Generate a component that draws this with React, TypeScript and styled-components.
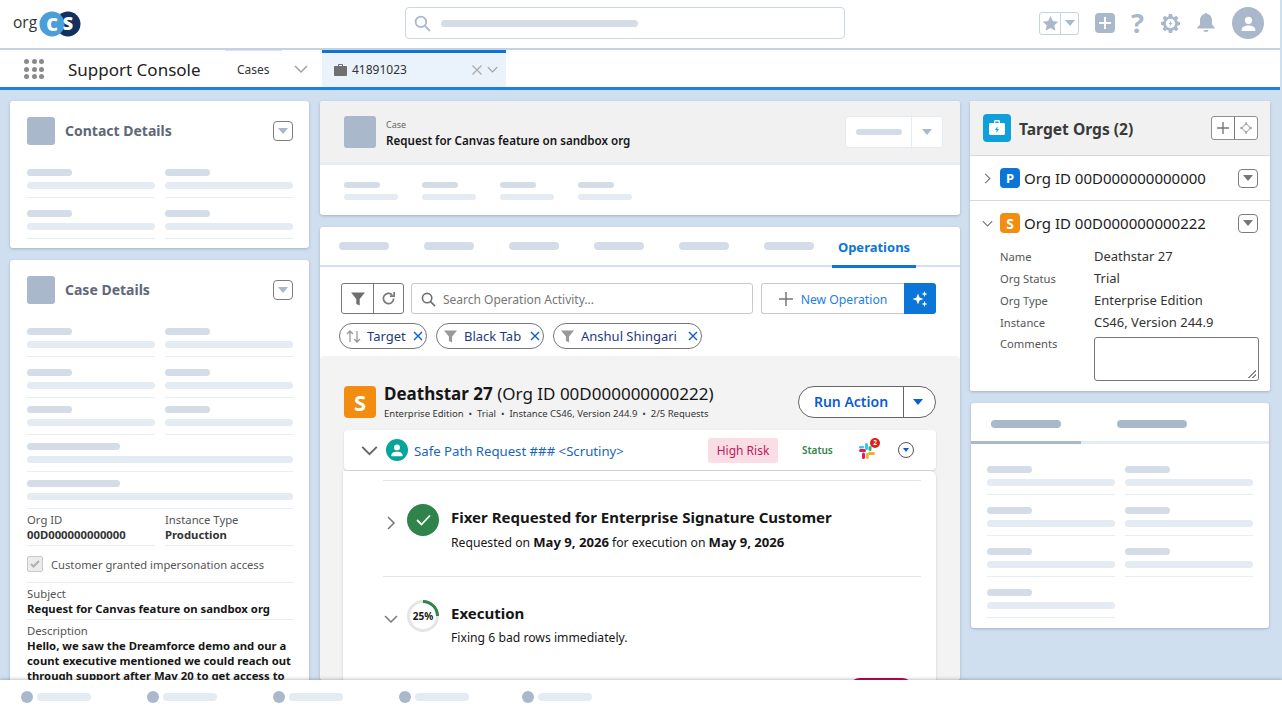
import React from 'react';
import styled, { createGlobalStyle } from 'styled-components';

const GlobalStyle = createGlobalStyle`
  html, body {
    margin: 0;
    padding: 0;
    height: 100%;
    overflow: hidden;
    background: #d0dff0;
    font-family: 'Noto Sans', 'Open Sans', sans-serif;
  }
  * { box-sizing: border-box; }
`;

const Page = styled.div`
  width: 1282px;
  height: 720px;
  display: flex;
  flex-direction: column;
  overflow: hidden;
`;

const Header = styled.header`
  width: 1280px;
  height: 50px;
  flex: none;
  background: #fff;
  border-bottom: 2px solid #c5d2e2;
  display: grid;
  grid-template-columns: 405px 440px 1fr;
  align-items: center;
`;

const Logo = styled.svg`
  margin-left: 12px;
  display: block;
`;

const LogoWord = styled.text`
  font-family: 'Open Sans', sans-serif;
  font-size: 15.5px;
  font-weight: 400;
  fill: #333;
`;

const LogoLetter = styled.text`
  font-family: 'Open Sans', sans-serif;
  font-size: 18px;
  font-weight: 800;
  fill: #fff;
  text-anchor: middle;
`;

const GlobalSearch = styled.div`
  height: 32px;
  margin-top: -2px;
  border: 1px solid #cdd6e3;
  border-radius: 4px;
  display: flex;
  align-items: center;
  padding-left: 8px;
  gap: 10px;
`;

const Skeleton = styled.div<{ $w: number; $h?: number; $tone?: 'light' | 'mid' | 'dark' }>`
  width: ${(p) => p.$w}px;
  height: ${(p) => p.$h ?? 7}px;
  flex: none;
  border-radius: 4px;
  background: ${(p) => (p.$tone === 'dark' ? '#a9b8ca' : p.$tone === 'mid' ? '#d4dce8' : '#e5ebf3')};
`;

const HeaderActions = styled.div`
  display: flex;
  align-items: center;
  justify-content: flex-end;
  padding-right: 16px;
  margin-top: -2px;
`;

const FavoriteGroup = styled.div`
  width: 40px;
  height: 23px;
  border: 1px solid #c5d2e2;
  border-radius: 3px;
  display: grid;
  grid-template-columns: 21px 1fr;
  align-items: center;
  justify-items: center;
  margin-right: 16px;
  & > :first-child {
    border-right: 1px solid #c5d2e2;
  }
`;

const FavoriteCell = styled.div`
  width: 100%;
  height: 21px;
  display: flex;
  align-items: center;
  justify-content: center;
`;

const Caret = styled.span<{ $color?: string; $size?: number }>`
  display: block;
  width: 0;
  height: 0;
  border-left: ${(p) => p.$size ?? 5}px solid transparent;
  border-right: ${(p) => p.$size ?? 5}px solid transparent;
  border-top: ${(p) => (p.$size ?? 5) + 1}px solid ${(p) => p.$color ?? '#a9b8ca'};
`;

const AddBox = styled.div`
  width: 20px;
  height: 20px;
  border-radius: 4px;
  background: #a9b8ca;
  display: flex;
  align-items: center;
  justify-content: center;
  margin-right: 15px;
`;

const HelpMark = styled.span`
  width: 15px;
  margin-right: 16px;
  color: #a9b8ca;
  font-size: 27px;
  line-height: 24px;
  font-weight: 700;
  text-align: center;
  display: flex;
  justify-content: center;
`;

const HeaderIcon = styled.svg`
  display: block;
  margin-right: 16px;
`;

const Avatar = styled.div`
  width: 32px;
  height: 32px;
  border-radius: 50%;
  background: #a9b8ca;
  display: flex;
  align-items: center;
  justify-content: center;
`;

const NavBar = styled.nav`
  width: 1280px;
  height: 40px;
  flex: none;
  background: #fff;
  border-bottom: 3px solid #1b7fe3;
  display: flex;
`;

const AppLauncher = styled.div`
  width: 20px;
  height: 20px;
  margin: 9px 24px 0 24px;
  display: grid;
  grid-template-columns: repeat(3, 5px);
  grid-auto-rows: 5px;
  gap: 2.5px;
`;

const LauncherDot = styled.span`
  border-radius: 50%;
  background: #8a8a8a;
`;

const AppName = styled.div`
  width: 157px;
  font-size: 17px;
  line-height: 40px;
  color: #222;
`;

const NavTab = styled.div`
  width: 97px;
  padding: 1px 14px 0 12px;
  display: flex;
  align-items: center;
  justify-content: space-between;
  font-size: 12px;
  color: #333;
  position: relative;
  &::before {
    content: '';
    position: absolute;
    top: 0;
    left: 0;
    width: 57px;
    height: 1px;
    background: #d8e2ee;
  }
`;

const ActiveTab = styled.div`
  width: 184px;
  background: #eaf2fc;
  border-top: 3px solid #0b76d8;
  display: flex;
  align-items: center;
  font-size: 12px;
  color: #333;
  padding: 0 8px 1px 12px;
  gap: 5px;
`;

const TabLabel = styled.span`
  flex: 1;
`;

const Content = styled.main`
  flex: 1;
  min-height: 0;
  overflow: hidden;
  padding: 11px 0 0 10px;
  display: flex;
  align-items: flex-start;
  gap: 11px;
`;

const Column = styled.div<{ $w: number }>`
  width: ${(p) => p.$w}px;
  flex: none;
  display: flex;
  flex-direction: column;
  gap: 12px;
`;

const RightColumn = styled(Column)`
  margin-left: -1px;
`;

const Card = styled.section`
  background: #fff;
  border-radius: 3px;
  box-shadow: 0 1px 3px rgba(60, 70, 90, 0.3);
`;

const SideCard = styled(Card)<{ $height: number }>`
  height: ${(p) => p.$height}px;
  padding: 16px 16px 0 17px;
`;

const CardTitleRow = styled.div`
  display: flex;
  align-items: center;
  gap: 10px;
  height: 28px;
  margin-bottom: 24px;
`;

const IconSquare = styled.div<{ $w: number; $h: number }>`
  width: ${(p) => p.$w}px;
  height: ${(p) => p.$h}px;
  flex: none;
  border-radius: 3px;
  background: #a9b8ca;
`;

const CardTitle = styled.h2`
  flex: 1;
  margin: 0;
  font-size: 14px;
  line-height: 20px;
  font-weight: 700;
  color: #5e6878;
`;

const MenuButton = styled.button<{ $size?: number }>`
  width: 20px;
  height: ${(p) => p.$size ?? 20}px;
  padding: 0;
  flex: none;
  background: #fff;
  border: 1px solid #7c7c7c;
  border-radius: 4px;
  display: flex;
  align-items: center;
  justify-content: center;
`;

const FieldGrid = styled.div`
  display: grid;
  grid-template-columns: 128px 128px;
  column-gap: 10px;
  row-gap: 12px;
`;

const TightFieldGrid = styled(FieldGrid)`
  margin-top: 8px;
`;

const FieldSkeleton = styled.div`
  display: flex;
  flex-direction: column;
  gap: 6px;
  padding-bottom: 8px;
  border-bottom: 1px solid #e8edf4;
`;

const WideField = styled(FieldSkeleton)`
  margin-top: 8px;
`;

const CaseInfoRow = styled.div`
  display: grid;
  grid-template-columns: 128px 128px;
  column-gap: 10px;
  padding-top: 3px;
`;

const CaseInfoCell = styled.div`
  height: 34px;
  border-bottom: 1px solid #e8edf4;
  font-size: 11.3px;
  line-height: 15px;
  color: #555;
`;

const StrongValue = styled.div`
  font-weight: 700;
  color: #333;
`;

const Impersonation = styled.div`
  height: 37px;
  border-bottom: 1px solid #e8edf4;
  display: flex;
  align-items: center;
  gap: 8px;
  font-size: 11.2px;
  color: #555;
`;

const DisabledCheck = styled.span`
  width: 16px;
  height: 16px;
  border: 1px solid #c9c9c9;
  border-radius: 2px;
  background: #ececec;
  display: flex;
  align-items: center;
  justify-content: center;
`;

const TextField = styled.div`
  padding-top: 3px;
  font-size: 11.3px;
  line-height: 15px;
  color: #555;
  & + & {
    border-top: 1px solid #e8edf4;
    padding-top: 3px;
  }
`;

const TextValue = styled.div`
  font-weight: 700;
  color: #161616;
  padding-bottom: 3px;
  white-space: nowrap;
`;

const HighlightsCard = styled(Card)`
  height: 114px;
  overflow: hidden;
`;

const RecordHeader = styled.div`
  height: 64px;
  background: #f1f1f1;
  border-bottom: 3px solid #e6edf4;
  display: flex;
  align-items: center;
  padding: 0 17px 0 24px;
  gap: 10px;
`;

const RecordTitle = styled.div`
  flex: 1;
  color: #161616;
  font-size: 11.6px;
  font-weight: 600;
  line-height: 15px;
  padding-top: 2px;
`;

const RecordType = styled.div`
  color: #666;
  font-size: 9px;
  font-weight: 400;
  line-height: 13px;
  margin-bottom: 2px;
`;

const FollowGroup = styled.div`
  width: 98px;
  height: 32px;
  margin-top: 1px;
  background: #fff;
  border: 1px solid #e5ebf3;
  border-radius: 3px;
  display: grid;
  grid-template-columns: 1fr 31px;
  align-items: center;
  justify-items: center;
`;

const FollowCaret = styled.div`
  height: 100%;
  width: 100%;
  border-left: 1px solid #e5ebf3;
  display: flex;
  align-items: center;
  justify-content: center;
`;

const HighlightFields = styled.div`
  display: flex;
  gap: 24px;
  padding: 17px 24px;
`;

const HighlightField = styled.div`
  display: flex;
  flex-direction: column;
  gap: 6px;
`;

const WorkCard = styled(Card)`
  height: 453px;
  overflow: hidden;
`;

const TabStrip = styled.div`
  height: 40px;
  border-bottom: 2px solid #d4e0ee;
  display: flex;
  align-items: center;
  padding-left: 19px;
  gap: 35px;
`;

const TabSkeleton = styled(Skeleton)`
  margin-top: -1px;
`;

const OperationsTab = styled.div`
  height: 41px;
  width: 84px;
  margin-left: -17px;
  margin-bottom: -2px;
  border-bottom: 3px solid #0b76d8;
  color: #0b76d8;
  font-size: 13px;
  font-weight: 700;
  display: flex;
  align-items: center;
  justify-content: center;
  padding-top: 2px;
`;

const Toolbar = styled.div`
  height: 32px;
  margin: 16px 24px 0 21px;
  display: flex;
  gap: 7px;
`;

const ButtonGroup = styled.div`
  width: 63px;
  height: 31px;
  border: 1px solid #777;
  border-radius: 3px;
  display: grid;
  grid-template-columns: 31px 1fr;
  background: #fff;
  flex: none;
`;

const GroupCell = styled.div`
  display: flex;
  align-items: center;
  justify-content: center;
  & + & { border-left: 1px solid #777; }
`;

const OperationSearch = styled.div`
  width: 342px;
  height: 31px;
  border: 1px solid #c9c9c9;
  border-radius: 3px;
  display: flex;
  align-items: center;
  gap: 7px;
  padding: 1px 0 0 9px;
  color: #777;
  font-size: 12px;
  flex: none;
`;

const NewOperation = styled.div`
  width: 175px;
  height: 31px;
  margin-left: 1px;
  display: flex;
`;

const NewOperationLabel = styled.div`
  flex: 1;
  border: 1px solid #c9c9c9;
  border-right: 0;
  border-radius: 3px 0 0 3px;
  display: flex;
  align-items: center;
  justify-content: center;
  gap: 8px;
  padding-top: 1px;
  color: #1b7fe3;
  font-size: 12.2px;
`;

const SparkleButton = styled.div`
  width: 32px;
  background: #0b76d8;
  border-radius: 0 3px 3px 0;
  display: flex;
  align-items: center;
  justify-content: center;
`;

const ChipRow = styled.div`
  margin: 8px 0 0 19px;
  display: flex;
  gap: 9px;
`;

const Chip = styled.div<{ $w: number }>`
  width: ${(p) => p.$w}px;
  height: 26px;
  border: 1px solid #777;
  border-radius: 13px;
  padding: 0 3px 0 6px;
  background: #fff;
  display: flex;
  align-items: center;
  color: #1f3a7a;
  font-size: 13px;
  white-space: nowrap;
  & > svg:first-child { margin-right: 6px; }
  & > svg:last-child { margin-left: auto; }
`;

const OperationsPanel = styled.div`
  margin-top: 7px;
  height: 324px;
  background: #f3f3f3;
  border-radius: 4px 4px 0 0;
  padding: 30px 24px 0 24px;
`;

const OrgHeading = styled.div`
  display: flex;
  align-items: center;
  gap: 8px;
  height: 32px;
`;

const OrgBadge = styled.div<{ $bg: string; $size: number; $font: number }>`
  width: ${(p) => p.$size}px;
  height: ${(p) => p.$size}px;
  flex: none;
  border-radius: 4px;
  background: ${(p) => p.$bg};
  color: #fff;
  font-weight: 700;
  font-size: ${(p) => p.$font}px;
  display: flex;
  align-items: center;
  justify-content: center;
`;

const OrgText = styled.div`
  flex: 1;
  color: #161616;
`;

const OrgName = styled.div`
  font-size: 17px;
  line-height: 20px;
  white-space: nowrap;
  & strong { font-weight: 700; }
`;

const OrgMeta = styled.div`
  margin-top: 3px;
  font-size: 9.5px;
  line-height: 13px;
  white-space: nowrap;
  color: #333;
`;

const RunAction = styled.div`
  width: 138px;
  height: 32px;
  border: 1px solid #666;
  border-radius: 16px;
  background: #fff;
  display: grid;
  grid-template-columns: 1fr 31px;
`;

const RunLabel = styled.div`
  border-right: 1px solid #666;
  color: #0b5cd5;
  font-size: 14px;
  font-weight: 600;
  display: flex;
  align-items: center;
  justify-content: center;
  padding-bottom: 2px;
`;

const RunCaret = styled.div`
  display: flex;
  align-items: center;
  justify-content: center;
  padding-right: 3px;
`;

const RequestRow = styled.div`
  margin-top: 12px;
  height: 40px;
  background: #fff;
  border-radius: 4px;
  box-shadow: 0 1px 2px rgba(60, 60, 60, 0.2);
  display: flex;
  align-items: center;
  padding: 0 22px 0 17px;
`;

const RequestAvatar = styled.div`
  width: 22px;
  height: 22px;
  margin: 0 6px 0 8px;
  border-radius: 50%;
  background: #06a59a;
  display: flex;
  align-items: center;
  justify-content: center;
`;

const RequestLink = styled.div`
  width: 294px;
  padding-top: 1px;
  color: #1b66b8;
  font-size: 13.2px;
  white-space: nowrap;
`;

const RiskTag = styled.div`
  width: 70px;
  height: 25px;
  border-radius: 3px;
  background: #fbdde6;
  color: #c2185b;
  font-size: 12px;
  display: flex;
  align-items: center;
  justify-content: center;
`;

const StatusText = styled.div`
  margin-left: 24px;
  width: 32px;
  color: #2e844a;
  font-size: 10px;
  font-weight: 600;
`;

const SlackWrap = styled.div`
  position: relative;
  margin-left: 25px;
  width: 16px;
  height: 16px;
`;

const SlackBadge = styled.span`
  position: absolute;
  top: -4px;
  right: -5px;
  width: 10px;
  height: 10px;
  border-radius: 50%;
  background: #e0201b;
  color: #fff;
  font-size: 6.5px;
  font-weight: 700;
  line-height: 10px;
  text-align: center;
`;

const CircleMenu = styled.div`
  margin-left: auto;
  width: 16px;
  height: 16px;
  border: 1px solid #555;
  border-radius: 50%;
  display: flex;
  align-items: center;
  justify-content: center;
`;

const StepsCard = styled.div`
  margin: 1px 0 0 -1px;
  height: 240px;
  background: #fff;
  padding: 9px 15px 0 40px;
  border-radius: 0 6px 0 0;
  box-shadow: 0 1px 3px rgba(60, 60, 60, 0.2);
  position: relative;
`;

const Step = styled.div`
  height: 96px;
  border-top: 1px solid #e2e2f0;
  display: flex;
  padding-top: 23px;
  position: relative;
`;

const StepChevron = styled.div`
  position: absolute;
  left: 1px;
  top: 32px;
`;

const StepIcon = styled.div`
  width: 32px;
  height: 32px;
  flex: none;
  margin: 0 12px 0 24px;
  position: relative;
`;

const DoneCircle = styled.div`
  width: 32px;
  height: 32px;
  border-radius: 50%;
  background: #2e844a;
  display: flex;
  align-items: center;
  justify-content: center;
`;

const ProgressLabel = styled.span`
  position: absolute;
  inset: 0;
  display: flex;
  align-items: center;
  justify-content: center;
  font-size: 10px;
  font-weight: 700;
  color: #161616;
`;

const StepBody = styled.div`
  margin-top: 2px;
  color: #161616;
  white-space: nowrap;
`;

const StepTitle = styled.div`
  font-size: 15px;
  line-height: 22px;
  font-weight: 700;
`;

const StepText = styled.div`
  margin-top: 4px;
  font-size: 12.2px;
  line-height: 20px;
  & strong { font-weight: 700; font-size: 13.1px; }
`;

const PeekPill = styled.div`
  position: absolute;
  right: 22px;
  top: 207px;
  width: 66px;
  height: 24px;
  border-radius: 12px;
  background: #b5004f;
`;

const TargetCard = styled(Card)`
  height: 290px;
  overflow: hidden;
  border-radius: 2px;
`;

const TargetHeader = styled.div`
  height: 55px;
  background: #f1f1f1;
  border-bottom: 1px solid #d8d8d8;
  display: flex;
  align-items: center;
  padding: 0 12px 0 13px;
`;

const TargetIcon = styled.div`
  width: 28px;
  height: 28px;
  border-radius: 4px;
  background: #0fa0dc;
  margin-right: 8px;
  display: flex;
  align-items: center;
  justify-content: center;
`;

const TargetTitle = styled.h2`
  flex: 1;
  margin: 0;
  padding-top: 1px;
  font-size: 15.6px;
  font-weight: 700;
  color: #3a3a3a;
`;

const TargetActions = styled.div`
  width: 47px;
  height: 24px;
  border: 1px solid #8f8f8f;
  border-radius: 3px;
  display: grid;
  grid-template-columns: 22px 1fr;
  background: #fff;
`;

const TargetRow = styled.div<{ $divider?: boolean }>`
  height: ${(p) => (p.$divider ? 45 : 44)}px;
  display: flex;
  align-items: center;
  padding: 0 12px 0 12px;
  border-bottom: ${(p) => (p.$divider ? '1px solid #d8d8d8' : '0')};
`;

const RowChevron = styled.div`
  width: 18px;
  display: flex;
`;

const OrgIdText = styled.div`
  flex: 1;
  margin-left: 4px;
  font-size: 15px;
  color: #222;
  white-space: nowrap;
`;

const DetailList = styled.dl`
  margin: 0;
  padding: 0 11px 0 30px;
  display: grid;
  grid-template-columns: 94px 1fr;
  grid-auto-rows: 22px;
  align-items: center;
`;

const DetailKey = styled.dt`
  font-size: 11.2px;
  color: #555;
`;

const DetailValue = styled.dd`
  margin: 0;
  font-size: 13px;
  color: #333;
  white-space: nowrap;
`;

const CommentKey = styled(DetailKey)`
  align-self: start;
  padding-top: 3px;
`;

const CommentBox = styled.div`
  align-self: start;
  height: 44px;
  margin-top: 4px;
  width: 165px;
  border: 1px solid #777;
  border-radius: 3px;
  position: relative;
  &::after {
    content: '';
    position: absolute;
    right: 2px;
    bottom: 2px;
    width: 8px;
    height: 8px;
    background: linear-gradient(135deg, transparent 50%, #888 50%, #888 58%, transparent 58%, transparent 75%, #888 75%, #888 83%, transparent 83%);
  }
`;

const InsightCard = styled(Card)`
  height: 225px;
  margin: 0 1px;
`;

const InsightTabs = styled.div`
  height: 41px;
  border-bottom: 3px solid #e5ebf3;
  display: flex;
  position: relative;
  align-items: center;
  padding: 3px 0 0 20px;
  gap: 56px;
  &::after {
    content: '';
    position: absolute;
    left: 0;
    bottom: -3px;
    width: 110px;
    height: 3px;
    background: #a9b8ca;
  }
`;

const InsightGrid = styled(FieldGrid)`
  padding: 22px 0 0 16px;
`;

const UtilityBar = styled.footer`
  position: relative;
  z-index: 2;
  width: 1282px;
  height: 40px;
  flex: none;
  background: #fff;
  box-shadow: 0 -1px 3px rgba(60, 60, 60, 0.3);
  display: flex;
  align-items: center;
  padding: 0 0 6px 21px;
`;

const UtilityItem = styled.div<{ $w: number }>`
  width: ${(p) => p.$w}px;
  display: flex;
  align-items: center;
  gap: 4px;
`;

const UtilityDot = styled.span`
  width: 12px;
  height: 12px;
  border-radius: 50%;
  background: #a9b8ca;
`;

const Chevron = ({ dir = 'down', size = 14, color = '#8a8a8a', width = 1.5 }: { dir?: 'down' | 'right'; size?: number; color?: string; width?: number }) => (
  <svg width={size} height={size} viewBox="0 0 14 14" fill="none" stroke={color} strokeWidth={width}>
    <path d={dir === 'down' ? 'M1 4l6 6 6-6' : 'M4 1l6 6-6 6'} />
  </svg>
);

const Funnel = ({ size = 16, color = '#8f8f8f' }: { size?: number; color?: string }) => (
  <svg width={size} height={size} viewBox="0 0 16 16" fill={color}>
    <path d="M1 1.5h14L9.7 8v6.5l-3.4-1.6V8z" />
  </svg>
);

const CloseX = () => (
  <svg width="10" height="10" viewBox="0 0 10 10" fill="none" stroke="#0b5cd5" strokeWidth="1.4">
    <path d="M1 1l8 8M9 1l-8 8" />
  </svg>
);

const Magnifier = ({ size = 16, color = '#a9b8ca' }: { size?: number; color?: string }) => (
  <svg width={size} height={size} viewBox="0 0 16 16" fill="none" stroke={color} strokeWidth="1.7">
    <circle cx="6.5" cy="6.5" r="5" />
    <path d="M10.2 10.2L15 15" />
  </svg>
);

const Person = ({ size = 16 }: { size?: number }) => (
  <svg width={size} height={size} viewBox="0 0 16 16" fill="#fff">
    <circle cx="8" cy="5" r="3.4" />
    <path d="M1.5 14.5c0-3.2 2.6-4.6 6.5-4.6s6.5 1.4 6.5 4.6c0 .4-.3.5-.6.5H2.100c-.3 0-.6-.1-.6-.5z" />
  </svg>
);

const SlackLogo = () => (
  <svg width="16" height="16" viewBox="0 0 16 16">
    <rect x="0" y="6" width="7" height="3" rx="1.5" fill="#e01e5a" />
    <rect x="3" y="9.5" width="3" height="6.5" rx="1.5" fill="#e01e5a" />
    <rect x="6" y="0" width="3" height="7" rx="1.5" fill="#36c5f0" />
    <rect x="0" y="3" width="5" height="2.5" rx="1.2" fill="#36c5f0" />
    <rect x="9.5" y="3" width="3" height="5" rx="1.5" fill="#2eb67d" />
    <rect x="9" y="9" width="7" height="3" rx="1.5" fill="#ecb22e" />
    <rect x="7" y="10" width="2.6" height="6" rx="1.3" fill="#ecb22e" />
  </svg>
);

const SkeletonField = () => (
  <FieldSkeleton>
    <Skeleton $w={45} $tone="mid" />
    <Skeleton $w={128} />
  </FieldSkeleton>
);

const App = () => (
  <Page>
    <GlobalStyle />
    <Header>
      <Logo width="80" height="28" viewBox="0 0 80 28">
        <LogoWord x="1" y="18">org</LogoWord>
        <circle cx="56" cy="14" r="12.5" fill="#14305f" />
        <circle cx="40" cy="14" r="12.5" fill="#4a9fd8" />
        <LogoLetter x="40" y="20.500">C</LogoLetter>
        <LogoLetter x="56" y="20">S</LogoLetter>
      </Logo>
      <GlobalSearch>
        <Magnifier size={17} />
        <Skeleton $w={197} $h={7} $tone="mid" />
      </GlobalSearch>
      <HeaderActions>
        <FavoriteGroup>
          <FavoriteCell>
            <svg width="17" height="17" viewBox="0 0 24 24" fill="#a9b8ca">
              <path d="M12 1.500l3.300 7 7.700.9-5.700 5.200 1.600 7.600L12 18.400l-6.900 3.800 1.600-7.600L1 9.400l7.700-.9z" />
            </svg>
          </FavoriteCell>
          <FavoriteCell>
            <Caret />
          </FavoriteCell>
        </FavoriteGroup>
        <AddBox>
          <svg width="12" height="12" viewBox="0 0 12 12" stroke="#fff" strokeWidth="2">
            <path d="M6 0v12M0 6h12" />
          </svg>
        </AddBox>
        <HelpMark>?</HelpMark>
        <HeaderIcon width="19" height="19" viewBox="0 0 20 20">
          <path
            fill="#a9b8ca"
            fillRule="evenodd"
            d="M8.300 0h3.400l.5 2.600 1.600.7 2.200-1.500 2.300 2.300-1.500 2.200.7 1.600 2.500.5v3.200l-2.500.5-.7 1.600 1.500 2.200-2.300 2.300-2.200-1.500-1.600.7-.5 2.600H8.300l-.5-2.600-1.600-.7L4 18.200l-2.300-2.300 1.500-2.200-.7-1.600L0 11.600V8.400l2.500-.5.7-1.600-1.500-2.200L4 1.800l2.200 1.500 1.600-.7zM10 5a5 5 0 100 10 5 5 0 000-10z"
          />
          <path fill="#a9b8ca" d="M11 6.500L8 10.500h1.700L9 13.500l3-4h-1.700z" />
        </HeaderIcon>
        <HeaderIcon width="20" height="20" viewBox="0 0 20 20" fill="#a9b8ca">
          <path d="M10 0a2 2 0 011.600 1C14.400 1.700 16 4 16 7v4.500l2.600 3c.4.5 0 1.100-.6 1.100H2c-.6 0-1-.6-.6-1.100l2.600-3V7c0-3 1.600-5.300 4.400-6A2 2 0 0110 0z" />
          <path d="M7.300 17h5.400a2.800 2.800 0 01-5.400 0z" />
        </HeaderIcon>
        <Avatar>
          <Person size={17} />
        </Avatar>
      </HeaderActions>
    </Header>

    <NavBar>
      <AppLauncher>
        {Array.from({ length: 9 }).map((_, i) => (
          <LauncherDot key={i} />
        ))}
      </AppLauncher>
      <AppName>Support Console</AppName>
      <NavTab>
        Cases
        <Chevron size={14} color="#a0a0a0" />
      </NavTab>
      <ActiveTab>
        <svg width="13" height="12" viewBox="0 0 13 12" fill="#6f6f6f">
          <path d="M4 2V.8C4 .4 4.400 0 4.800 0h3.400c.4 0 .8.4.8.8V2h3c.6 0 1 .4 1 1v8c0 .6-.4 1-1 1H1c-.6 0-1-.4-1-1V3c0-.6.4-1 1-1zm1 0h3V1H5z" />
        </svg>
        <TabLabel>41891023</TabLabel>
        <svg width="10" height="10" viewBox="0 0 10 10" stroke="#a9a9a9" strokeWidth="1.2">
          <path d="M.5.5l9 9M9.500.5l-9 9" />
        </svg>
        <Chevron size={11} color="#a0a0a0" />
      </ActiveTab>
    </NavBar>

    <Content>
      <Column $w={299}>
        <SideCard $height={147}>
          <CardTitleRow>
            <IconSquare $w={28} $h={28} />
            <CardTitle>Contact Details</CardTitle>
            <MenuButton>
              <Caret />
            </MenuButton>
          </CardTitleRow>
          <FieldGrid>
            <SkeletonField />
            <SkeletonField />
            <SkeletonField />
            <SkeletonField />
          </FieldGrid>
        </SideCard>
        <SideCard $height={480}>
          <CardTitleRow>
            <IconSquare $w={28} $h={28} />
            <CardTitle>Case Details</CardTitle>
            <MenuButton>
              <Caret />
            </MenuButton>
          </CardTitleRow>
          <FieldGrid>
            <SkeletonField />
            <SkeletonField />
            <SkeletonField />
            <SkeletonField />
          </FieldGrid>
          <TightFieldGrid>
            <SkeletonField />
            <SkeletonField />
          </TightFieldGrid>
          <WideField>
            <Skeleton $w={93} $tone="mid" />
            <Skeleton $w={266} />
          </WideField>
          <WideField>
            <Skeleton $w={93} $tone="mid" />
            <Skeleton $w={266} />
          </WideField>
          <CaseInfoRow>
            <CaseInfoCell>
              Org ID
              <StrongValue>00D000000000000</StrongValue>
            </CaseInfoCell>
            <CaseInfoCell>
              Instance Type
              <StrongValue>Production</StrongValue>
            </CaseInfoCell>
          </CaseInfoRow>
          <Impersonation>
            <DisabledCheck>
              <svg width="10" height="8" viewBox="0 0 10 8" fill="none" stroke="#b0b0b0" strokeWidth="2">
                <path d="M1 4l2.500 2.500L9 1" />
              </svg>
            </DisabledCheck>
            Customer granted impersonation access
          </Impersonation>
          <TextField>
            Subject
            <TextValue>Request for Canvas feature on sandbox org</TextValue>
          </TextField>
          <TextField>
            Description
            <TextValue>
              Hello, we saw the Dreamforce demo and our a
              <br />
              count executive mentioned we could reach out
              <br />
              through support after May 20 to get access to
            </TextValue>
          </TextField>
        </SideCard>
      </Column>

      <Column $w={640}>
        <HighlightsCard>
          <RecordHeader>
            <IconSquare $w={32} $h={32} />
            <RecordTitle>
              <RecordType>Case</RecordType>
              Request for Canvas feature on sandbox org
            </RecordTitle>
            <FollowGroup>
              <Skeleton $w={46} $h={6} $tone="mid" />
              <FollowCaret>
                <Caret />
              </FollowCaret>
            </FollowGroup>
          </RecordHeader>
          <HighlightFields>
            {[0, 1, 2, 3].map((i) => (
              <HighlightField key={i}>
                <Skeleton $w={36} $h={6} $tone="mid" />
                <Skeleton $w={54} $h={6} />
              </HighlightField>
            ))}
          </HighlightFields>
        </HighlightsCard>

        <WorkCard>
          <TabStrip>
            {[0, 1, 2, 3, 4, 5].map((i) => (
              <TabSkeleton key={i} $w={50} $h={8} $tone="mid" />
            ))}
            <OperationsTab>Operations</OperationsTab>
          </TabStrip>
          <Toolbar>
            <ButtonGroup>
              <GroupCell>
                <Funnel size={16} color="#6f6f6f" />
              </GroupCell>
              <GroupCell>
                <svg width="15" height="15" viewBox="0 0 16 16" fill="none" stroke="#777" strokeWidth="1.8">
                  <path d="M13.500 8a5.500 5.500 0 11-1.600-3.900" />
                  <path d="M14 1v4.500H9.500" />
                </svg>
              </GroupCell>
            </ButtonGroup>
            <OperationSearch>
              <Magnifier size={15} color="#6f6f6f" />
              Search Operation Activity...
            </OperationSearch>
            <NewOperation>
              <NewOperationLabel>
                <svg width="14" height="14" viewBox="0 0 14 14" stroke="#777" strokeWidth="1.5">
                  <path d="M7 0v14M0 7h14" />
                </svg>
                New Operation
              </NewOperationLabel>
              <SparkleButton>
                <svg width="16" height="16" viewBox="0 0 16 16" fill="#fff">
                  <path d="M6 2.500l1.500 4 4 1.500-4 1.500L6 13.500l-1.500-4-4-1.500 4-1.500z" />
                  <path d="M12.500 0l.8 2.200 2.200.8-2.200.8-.8 2.200-.8-2.200-2.200-.8 2.200-.8zM12.500 10l.8 2.200 2.200.8-2.200.8-.8 2.200-.8-2.200-2.200-.8 2.200-.8z" />
                </svg>
              </SparkleButton>
            </NewOperation>
          </Toolbar>
          <ChipRow>
            <Chip $w={88}>
              <svg width="15" height="15" viewBox="0 0 15 15" fill="none" stroke="#9a9a9a" strokeWidth="1.300">
                <path d="M4 13V2M1 5l3-3 3 3M11 2v11M8 10l3 3 3-3" />
              </svg>
              Target
              <CloseX />
            </Chip>
            <Chip $w={108}>
              <Funnel size={15} color="#9a9a9a" />
              Black Tab
              <CloseX />
            </Chip>
            <Chip $w={149}>
              <Funnel size={15} color="#9a9a9a" />
              Anshul Shingari
              <CloseX />
            </Chip>
          </ChipRow>
          <OperationsPanel>
            <OrgHeading>
              <OrgBadge $bg="#f38d10" $size={32} $font={22}>S</OrgBadge>
              <OrgText>
                <OrgName>
                  <strong>Deathstar 27</strong> (Org ID 00D000000000222)
                </OrgName>
                <OrgMeta>Enterprise Edition&nbsp; •&nbsp; Trial&nbsp; •&nbsp; Instance CS46, Version 244.9&nbsp; •&nbsp; 2/5 Requests</OrgMeta>
              </OrgText>
              <RunAction>
                <RunLabel>Run Action</RunLabel>
                <RunCaret>
                  <Caret $color="#0b5cd5" $size={5} />
                </RunCaret>
              </RunAction>
            </OrgHeading>
            <RequestRow>
              <Chevron size={17} color="#666" width={1.6} />
              <RequestAvatar>
                <Person size={14} />
              </RequestAvatar>
              <RequestLink>Safe Path Request ### &lt;Scrutiny&gt;</RequestLink>
              <RiskTag>High Risk</RiskTag>
              <StatusText>Status</StatusText>
              <SlackWrap>
                <SlackLogo />
                <SlackBadge>2</SlackBadge>
              </SlackWrap>
              <CircleMenu>
                <Caret $color="#0b5cd5" $size={3} />
              </CircleMenu>
            </RequestRow>
            <StepsCard>
              <Step>
                <StepChevron>
                  <Chevron dir="right" size={14} color="#777" />
                </StepChevron>
                <StepIcon>
                  <DoneCircle>
                    <svg width="15" height="12" viewBox="0 0 15 12" fill="none" stroke="#fff" strokeWidth="1.800">
                      <path d="M1 6l4.500 4.500L14 1.500" />
                    </svg>
                  </DoneCircle>
                </StepIcon>
                <StepBody>
                  <StepTitle>Fixer Requested for Enterprise Signature Customer</StepTitle>
                  <StepText>
                    Requested on <strong>May 9, 2026</strong> for execution on <strong>May 9, 2026</strong>
                  </StepText>
                </StepBody>
              </Step>
              <Step>
                <StepChevron>
                  <Chevron size={14} color="#777" />
                </StepChevron>
                <StepIcon>
                  <svg width="32" height="32" viewBox="0 0 32 32" fill="none" strokeWidth="3">
                    <circle cx="16" cy="16" r="14.500" stroke="#e5e5e5" />
                    <path d="M16 1.500A14.500 14.500 0 0130.500 16" stroke="#2e844a" />
                  </svg>
                  <ProgressLabel>25%</ProgressLabel>
                </StepIcon>
                <StepBody>
                  <StepTitle>Execution</StepTitle>
                  <StepText>Fixing 6 bad rows immediately.</StepText>
                </StepBody>
              </Step>
              <PeekPill />
            </StepsCard>
          </OperationsPanel>
        </WorkCard>
      </Column>

      <RightColumn $w={300}>
        <TargetCard>
          <TargetHeader>
            <TargetIcon>
              <svg width="18" height="18" viewBox="0 0 18 18" fill="#fff">
                <path d="M6 4V2.500C6 1.700 6.700 1 7.500 1h3c.8 0 1.500.7 1.500 1.500V4h3.500c.8 0 1.500.7 1.500 1.500v9c0 .8-.7 1.500-1.500 1.500h-13C1.700 16 1 15.300 1 14.500v-9C1 4.700 1.700 4 2.500 4zm1.300 0h3.400V2.400H7.300z" />
                <path d="M9.800 7L7 11h1.800L8.200 14 11 10H9.200z" fill="#0fa0dc" />
              </svg>
            </TargetIcon>
            <TargetTitle>Target Orgs (2)</TargetTitle>
            <TargetActions>
              <GroupCell>
                <svg width="12" height="12" viewBox="0 0 12 12" stroke="#777" strokeWidth="1.400">
                  <path d="M6 0v12M0 6h12" />
                </svg>
              </GroupCell>
              <GroupCell>
                <svg width="12" height="12" viewBox="0 0 12 12" fill="none" stroke="#888" strokeWidth="1">
                  <path d="M6 1.500L10.500 6 6 10.500 1.500 6zM6 0v3M6 9v3M0 6h3M9 6h3" />
                </svg>
              </GroupCell>
            </TargetActions>
          </TargetHeader>
          <TargetRow $divider>
            <RowChevron>
              <Chevron dir="right" size={11} color="#777" width={1.400} />
            </RowChevron>
            <OrgBadge $bg="#0b76d8" $size={20} $font={13}>P</OrgBadge>
            <OrgIdText>Org ID 00D000000000000</OrgIdText>
            <MenuButton $size={19}>
              <Caret $color="#777" />
            </MenuButton>
          </TargetRow>
          <TargetRow>
            <RowChevron>
              <Chevron size={11} color="#777" width={1.400} />
            </RowChevron>
            <OrgBadge $bg="#f38d10" $size={20} $font={14}>S</OrgBadge>
            <OrgIdText>Org ID 00D000000000222</OrgIdText>
            <MenuButton $size={19}>
              <Caret $color="#777" />
            </MenuButton>
          </TargetRow>
          <DetailList>
            <DetailKey>Name</DetailKey>
            <DetailValue>Deathstar 27</DetailValue>
            <DetailKey>Org Status</DetailKey>
            <DetailValue>Trial</DetailValue>
            <DetailKey>Org Type</DetailKey>
            <DetailValue>Enterprise Edition</DetailValue>
            <DetailKey>Instance</DetailKey>
            <DetailValue>CS46, Version 244.9</DetailValue>
            <CommentKey>Comments</CommentKey>
            <CommentBox />
          </DetailList>
        </TargetCard>
        <InsightCard>
          <InsightTabs>
            <Skeleton $w={70} $h={8} $tone="dark" />
            <Skeleton $w={70} $h={8} $tone="dark" />
          </InsightTabs>
          <InsightGrid>
            <SkeletonField />
            <SkeletonField />
            <SkeletonField />
            <SkeletonField />
            <SkeletonField />
            <SkeletonField />
            <SkeletonField />
          </InsightGrid>
        </InsightCard>
      </RightColumn>
    </Content>

    <UtilityBar>
      {[126, 126, 126, 123, 80].map((w, i) => (
        <UtilityItem key={i} $w={w}>
          <UtilityDot />
          <Skeleton $w={54} $h={8} />
        </UtilityItem>
      ))}
    </UtilityBar>
  </Page>
);

export default App;
